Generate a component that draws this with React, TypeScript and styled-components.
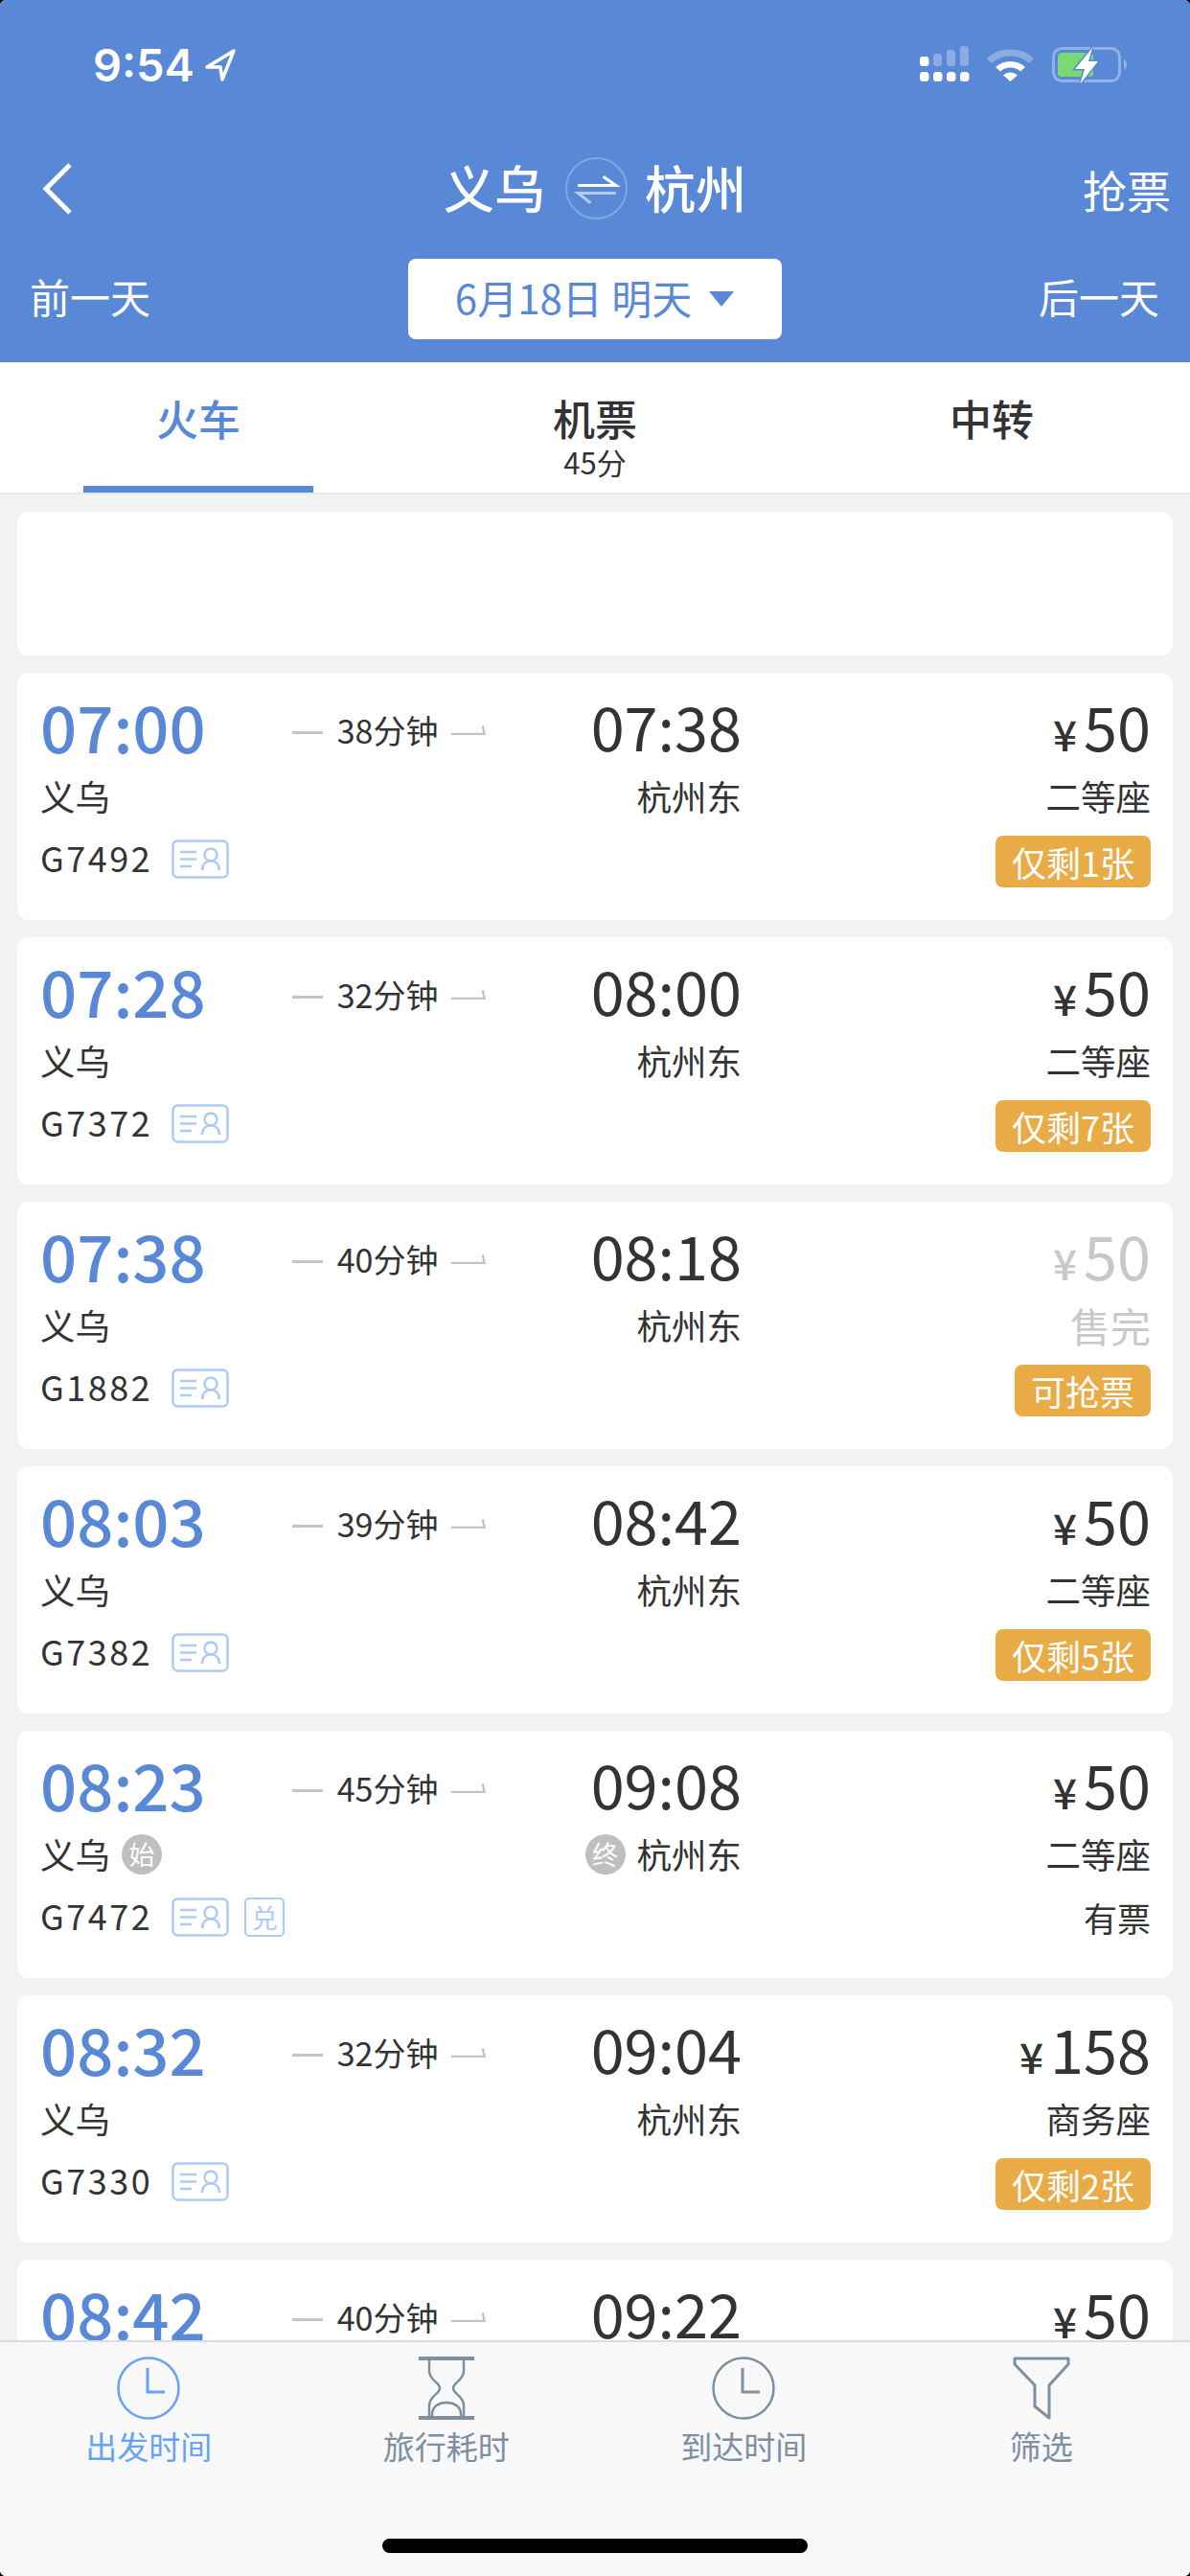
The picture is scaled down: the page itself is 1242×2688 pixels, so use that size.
import React from 'react'
import styled, { createGlobalStyle } from 'styled-components'

interface TrainTypes {
  depart: string
  arrive: string
  duration: string
  code: string
  price: string
  seat: string
  stock: string
  first?: boolean
  last?: boolean
  exchange?: boolean
  soldOut?: boolean
  plainStock?: boolean
}

const trains: TrainTypes[] = [
  { depart: '07:00', arrive: '07:38', duration: '38分钟', code: 'G7492', price: '50', seat: '二等座', stock: '仅剩1张' },
  { depart: '07:28', arrive: '08:00', duration: '32分钟', code: 'G7372', price: '50', seat: '二等座', stock: '仅剩7张' },
  { depart: '07:38', arrive: '08:18', duration: '40分钟', code: 'G1882', price: '50', seat: '售完', stock: '可抢票', soldOut: true },
  { depart: '08:03', arrive: '08:42', duration: '39分钟', code: 'G7382', price: '50', seat: '二等座', stock: '仅剩5张' },
  { depart: '08:23', arrive: '09:08', duration: '45分钟', code: 'G7472', price: '50', seat: '二等座', stock: '有票', first: true, last: true, exchange: true, plainStock: true },
  { depart: '08:32', arrive: '09:04', duration: '32分钟', code: 'G7330', price: '158', seat: '商务座', stock: '仅剩2张' },
  { depart: '08:42', arrive: '09:22', duration: '40分钟', code: 'G7384', price: '50', seat: '二等座', stock: '仅剩3张' },
]

const GlobalStyle = createGlobalStyle`
  html, body {
    margin: 0;
    padding: 0;
    background: #000;
  }
  * {
    box-sizing: border-box;
  }
`

function StatusIcons() {
  return (
    <svg width="218" height="40" viewBox="960 47 218 40">
      <g fill="#fff">
        <rect x="960" y="59" width="9.5" height="10" rx="3" />
        <rect x="960" y="75" width="9.5" height="10" rx="3.5" />
        <rect x="974" y="75" width="9.5" height="10" rx="3.5" />
        <rect x="988" y="75" width="9.5" height="10" rx="3.5" />
        <rect x="1002" y="75" width="9.5" height="10" rx="3.5" />
      </g>
      <g fill="#fff" opacity="0.3">
        <rect x="974" y="56" width="9" height="13" rx="3" />
        <rect x="988" y="52" width="9" height="17" rx="3" />
        <rect x="1002" y="48" width="9" height="21" rx="3" />
      </g>
      <path d="M1030 61 A36 36 0 0 1 1079 61 L1074 66 A29 29 0 0 0 1035 66 Z" fill="#fff" opacity="0.3" />
      <path d="M1039 70 A23 23 0 0 1 1070 70 L1065 74.500 A16 16 0 0 0 1044 74.500 Z" fill="#fff" />
      <path d="M1054.500 85 L1047 78.500 A11 11 0 0 1 1062 78.500 Z" fill="#fff" />
      <rect x="1099.500" y="50.500" width="69" height="34" rx="9" fill="none" stroke="#fff" strokeOpacity="0.35" strokeWidth="3" />
      <path d="M1173 62 C1177 64 1177 71 1173 73 Z" fill="#fff" opacity="0.35" />
      <rect x="1104" y="55" width="37" height="25" rx="4" fill="#79d975" />
      <path d="M1140 50 L1122 72 L1132 72 L1127 88 L1146 64 L1136 64 Z" fill="#fff" stroke="#5988d6" strokeWidth="3" paintOrder="stroke" />
    </svg>
  )
}

function IdCardIcon() {
  return (
    <svg width="60" height="41" viewBox="0 0 60 41" fill="none" stroke="#aecbf5" strokeWidth="2.500">
      <rect x="1.500" y="1.500" width="57" height="38" rx="5" />
      <path d="M9 13 H26 M9 20.500 H26 M9 28 H21" />
      <circle cx="41" cy="16" r="6.500" />
      <path d="M32 32 C32 19 50 19 50 32" />
    </svg>
  )
}

function ClockIcon({ color }: { color: string }) {
  return (
    <svg width="66" height="66" viewBox="0 0 66 66" fill="none" stroke={color} strokeWidth="2.500">
      <circle cx="33" cy="33" r="31.500" />
      <path d="M32 12 V37 H50" strokeWidth="3" />
    </svg>
  )
}

function HourglassIcon() {
  return (
    <svg width="60" height="66" viewBox="0 0 60 66" fill="none" stroke="#7d8fa1" strokeWidth="2.500">
      <path d="M1 2 H59 M1 64 H59" strokeWidth="4" />
      <path d="M12 3 V15 C12 25 23 27 23 33 C23 39 12 41 12 51 V63 M48 3 V15 C48 25 37 27 37 33 C37 39 48 41 48 51 V63" />
      <path d="M15 63 V60 C15 44 45 44 45 60 V63" />
    </svg>
  )
}

function FilterIcon() {
  return (
    <svg width="60" height="66" viewBox="0 0 60 66" fill="none" stroke="#7d8fa1" strokeWidth="3">
      <path d="M2 2 H58 V8 L38 30 V64 L23 52 V30 L2 8 Z" strokeLinejoin="round" />
    </svg>
  )
}

function TrainCard({ train }: { train: TrainTypes }) {
  return (
    <Card>
      <DepartTime>{train.depart}</DepartTime>
      <Duration>
        <DurationLine />
        <DurationText>{train.duration}</DurationText>
        <svg width="38" height="12" viewBox="0 0 38 12" fill="none" stroke="#c4c4c4" strokeWidth="2.500">
          <path d="M0 10 H36 L34 1" />
        </svg>
      </Duration>
      <ArriveTime>{train.arrive}</ArriveTime>
      <Price $muted={train.soldOut}>
        <Yen>¥</Yen>
        {train.price}
      </Price>

      <Station>
        义乌
        {train.first && <StationMark>始</StationMark>}
      </Station>
      <span />
      <ArriveStation>
        {train.last && <StationMark>终</StationMark>}
        杭州东
      </ArriveStation>
      <Seat $muted={train.soldOut}>{train.seat}</Seat>

      <CodeRow>
        <Code>{train.code}</Code>
        <IdCardIcon />
        {train.exchange && <ExchangeMark>兑</ExchangeMark>}
      </CodeRow>
      <Stock>
        {train.plainStock ? <PlainStock>{train.stock}</PlainStock> : <StockBadge>{train.stock}</StockBadge>}
      </Stock>
    </Card>
  )
}

function App() {
  return (
    <Screen>
      <GlobalStyle />
      <Header>
        <StatusBar>
          <Clock>
            9:54
            <svg width="34" height="36" viewBox="0 0 34 36" fill="none" stroke="#fff" strokeWidth="3.500" strokeLinejoin="round">
              <path d="M31 3 L3 20 L17 20 L19 33 Z" />
            </svg>
          </Clock>
          <StatusIcons />
        </StatusBar>
        <NavBar>
          <BackIcon viewBox="0 0 34 56" fill="none" stroke="#fff" strokeWidth="5">
            <path d="M30 3 L5 28 L30 53" />
          </BackIcon>
          <Route>
            义乌
            <SwapIcon viewBox="0 0 64 64" fill="none">
              <circle cx="32" cy="32" r="31" stroke="#fff" strokeOpacity="0.25" strokeWidth="2" />
              <path d="M13 29 H52 L39 20" stroke="#fff" strokeWidth="3" />
              <path d="M52 37 H13 L26 47" stroke="#fff" strokeOpacity="0.55" strokeWidth="3" />
            </SwapIcon>
            杭州
          </Route>
          <GrabLink>抢票</GrabLink>
        </NavBar>
        <DateBar>
          <DayLink>前一天</DayLink>
          <DateButton>
            <DateText>6月18日 明天</DateText>
            <DateCaret />
          </DateButton>
          <DayLink $right>后一天</DayLink>
        </DateBar>
      </Header>

      <Tabs>
        <Tab $active>
          火车
          <TabLine />
        </Tab>
        <Tab>
          机票
          <TabNote>45分</TabNote>
        </Tab>
        <Tab>中转</Tab>
      </Tabs>

      <List>
        <AdCard />
        {trains.map((train) => (
          <TrainCard key={train.depart} train={train} />
        ))}
      </List>

      <Footer>
        <FooterTabs>
          <FooterTab $active>
            <ClockIcon color="#66a3f5" />
            出发时间
          </FooterTab>
          <FooterTab>
            <HourglassIcon />
            旅行耗时
          </FooterTab>
          <FooterTab>
            <ClockIcon color="#7d8fa1" />
            到达时间
          </FooterTab>
          <FooterTab>
            <FilterIcon />
            筛选
          </FooterTab>
        </FooterTabs>
        <HomeBar />
      </Footer>
    </Screen>
  )
}

const Screen = styled.div`
  width: 1242px;
  height: 2688px;
  display: flex;
  flex-direction: column;
  overflow: hidden;
  border-radius: 6px;
  background: #f2f2f2;
  color: #333;
  font-family: 'Noto Sans CJK SC', 'Liberation Sans', sans-serif;
`

const Header = styled.header`
  height: 378px;
  flex-shrink: 0;
  background: #5988d6;
  color: #fff;
`

const StatusBar = styled.div`
  height: 133px;
  padding: 47px 64px 0 97px;
  display: flex;
  justify-content: space-between;
  align-items: flex-start;
`

const Clock = styled.div`
  display: flex;
  align-items: center;
  gap: 10px;
  font-family: Inter, 'Liberation Sans', sans-serif;
  font-size: 47px;
  line-height: 42px;
  font-weight: 600;
`

const NavBar = styled.div`
  height: 124px;
  padding: 0 20px;
  display: grid;
  grid-template-columns: minmax(0, 1fr) auto minmax(0, 1fr);
  align-items: center;
`

const BackIcon = styled.svg`
  width: 34px;
  height: 56px;
  margin: 3px 0 0 23px;
`

const Route = styled.div`
  display: flex;
  align-items: center;
  font-size: 53px;
  line-height: 64px;
  font-weight: 500;
`

const SwapIcon = styled.svg`
  width: 65px;
  height: 65px;
  margin: 2px 18px 0 21px;
`

const GrabLink = styled.div`
  justify-self: end;
  margin-top: 3px;
  font-size: 46px;
  line-height: 64px;
`

const DateBar = styled.div`
  padding: 13px 32px 0 31px;
  display: grid;
  grid-template-columns: 1fr 390px 1fr;
  align-items: center;
`

const DayLink = styled.div<{ $right?: boolean }>`
  margin-bottom: 6px;
  font-size: 42px;
  line-height: 60px;
  text-align: ${(p) => (p.$right ? 'right' : 'left')};
`

const DateButton = styled.div`
  height: 84px;
  display: flex;
  justify-content: center;
  align-items: center;
  gap: 18px;
  border-radius: 8px;
  background: #fff;
  color: #5988d6;
  font-size: 42px;
`

const DateText = styled.span`
  margin-bottom: 6px;
`

const DateCaret = styled.i`
  width: 0;
  height: 0;
  border-left: 13px solid transparent;
  border-right: 13px solid transparent;
  border-top: 16px solid #5988d6;
`

const Tabs = styled.nav`
  height: 138px;
  flex-shrink: 0;
  display: grid;
  grid-template-columns: 414px 414px 414px;
  background: #fff;
  border-bottom: 2px solid #e8e8e8;
`

const Tab = styled.div<{ $active?: boolean }>`
  position: relative;
  padding-top: 29px;
  display: flex;
  flex-direction: column;
  align-items: center;
  font-size: 44px;
  line-height: 58px;
  font-weight: 500;
  color: ${(p) => (p.$active ? '#5988d6' : '#333')};
`

const TabNote = styled.span`
  font-size: 31px;
  line-height: 34px;
  font-weight: 400;
`

const TabLine = styled.i`
  position: absolute;
  left: 87px;
  bottom: 0;
  width: 240px;
  height: 7px;
  background: #5988d6;
`

const List = styled.main`
  flex: 1;
  min-height: 0;
  overflow: hidden;
  padding: 18px 18px 0;
  display: flex;
  flex-direction: column;
  gap: 18px;
`

const AdCard = styled.div`
  height: 150px;
  flex-shrink: 0;
  border-radius: 12px;
  background: #fff;
`

const Card = styled.article`
  height: 258px;
  flex-shrink: 0;
  padding: 15px 23px 0 24px;
  display: grid;
  grid-template-columns: 263px 203px 266px 1fr;
  grid-template-rows: 80px 67px 64px;
  align-items: center;
  border-radius: 12px;
  background: #fff;
`

const DepartTime = styled.div`
  color: #5988d6;
  font-size: 67px;
  line-height: 80px;
  font-weight: 500;
`

const Duration = styled.div`
  margin-top: 10px;
  display: flex;
  align-items: center;
  gap: 14px;
  white-space: nowrap;
`

const DurationLine = styled.i`
  width: 33px;
  height: 3px;
  margin-top: 4px;
  background: #c4c4c4;
`

const DurationText = styled.span`
  width: 108px;
  margin-left: 1px;
  font-size: 34px;
  line-height: 40px;
`

const ArriveTime = styled.div`
  font-size: 63px;
  line-height: 80px;
  text-align: right;
`

const Price = styled.div<{ $muted?: boolean }>`
  margin-top: 8px;
  font-size: 63px;
  line-height: 80px;
  text-align: right;
  color: ${(p) => (p.$muted ? '#c8c8c8' : '#333')};
`

const Yen = styled.span`
  margin-right: 7px;
  font-size: 44px;
  font-weight: 500;
`

const Station = styled.div`
  display: flex;
  align-items: center;
  gap: 12px;
  font-size: 36.500px;
`

const ArriveStation = styled(Station)`
  justify-content: flex-end;
`

const StationMark = styled.span`
  width: 42px;
  height: 42px;
  display: flex;
  justify-content: center;
  align-items: center;
  border-radius: 50%;
  background: #bfbfbf;
  color: #fff;
  font-size: 27px;
`

const Seat = styled.div<{ $muted?: boolean }>`
  font-size: ${(p) => (p.$muted ? '42px' : '36.500px')};
  line-height: 54px;
  text-align: right;
  color: ${(p) => (p.$muted ? '#c8c8c8' : '#333')};
`

const CodeRow = styled.div`
  grid-column: 1 / span 3;
  display: flex;
  align-items: center;
  gap: 20px;
`

const Code = styled.span`
  margin-bottom: 4px;
  font-size: 36px;
  letter-spacing: 2.500px;
`

const ExchangeMark = styled.span`
  width: 42px;
  height: 41px;
  margin-left: -4px;
  display: flex;
  justify-content: center;
  align-items: center;
  border: 2.500px solid #aecbf5;
  border-radius: 5px;
  color: #aecbf5;
  font-size: 27px;
`

const Stock = styled.div`
  display: flex;
  justify-content: flex-end;
`

const StockBadge = styled.span`
  height: 54px;
  margin-top: 6px;
  padding: 0 17px;
  display: flex;
  align-items: center;
  border-radius: 8px;
  background: #e9ab45;
  color: #fff;
  font-size: 36px;
`

const PlainStock = styled.span`
  font-size: 35px;
`

const Footer = styled.footer`
  height: 246px;
  flex-shrink: 0;
  padding-top: 15px;
  display: flex;
  flex-direction: column;
  align-items: center;
  border-top: 2px solid #d8dde2;
  background: #f8f8f8;
`

const FooterTabs = styled.div`
  width: 100%;
  display: grid;
  grid-template-columns: repeat(4, 310.500px);
`

const FooterTab = styled.div<{ $active?: boolean }>`
  display: flex;
  flex-direction: column;
  align-items: center;
  gap: 3px;
  font-size: 33px;
  line-height: 48px;
  color: ${(p) => (p.$active ? '#66a3f5' : '#7d8fa1')};
`

const HomeBar = styled.div`
  width: 444px;
  height: 15px;
  margin-top: 73px;
  border-radius: 8px;
  background: #000;
`

export default App
